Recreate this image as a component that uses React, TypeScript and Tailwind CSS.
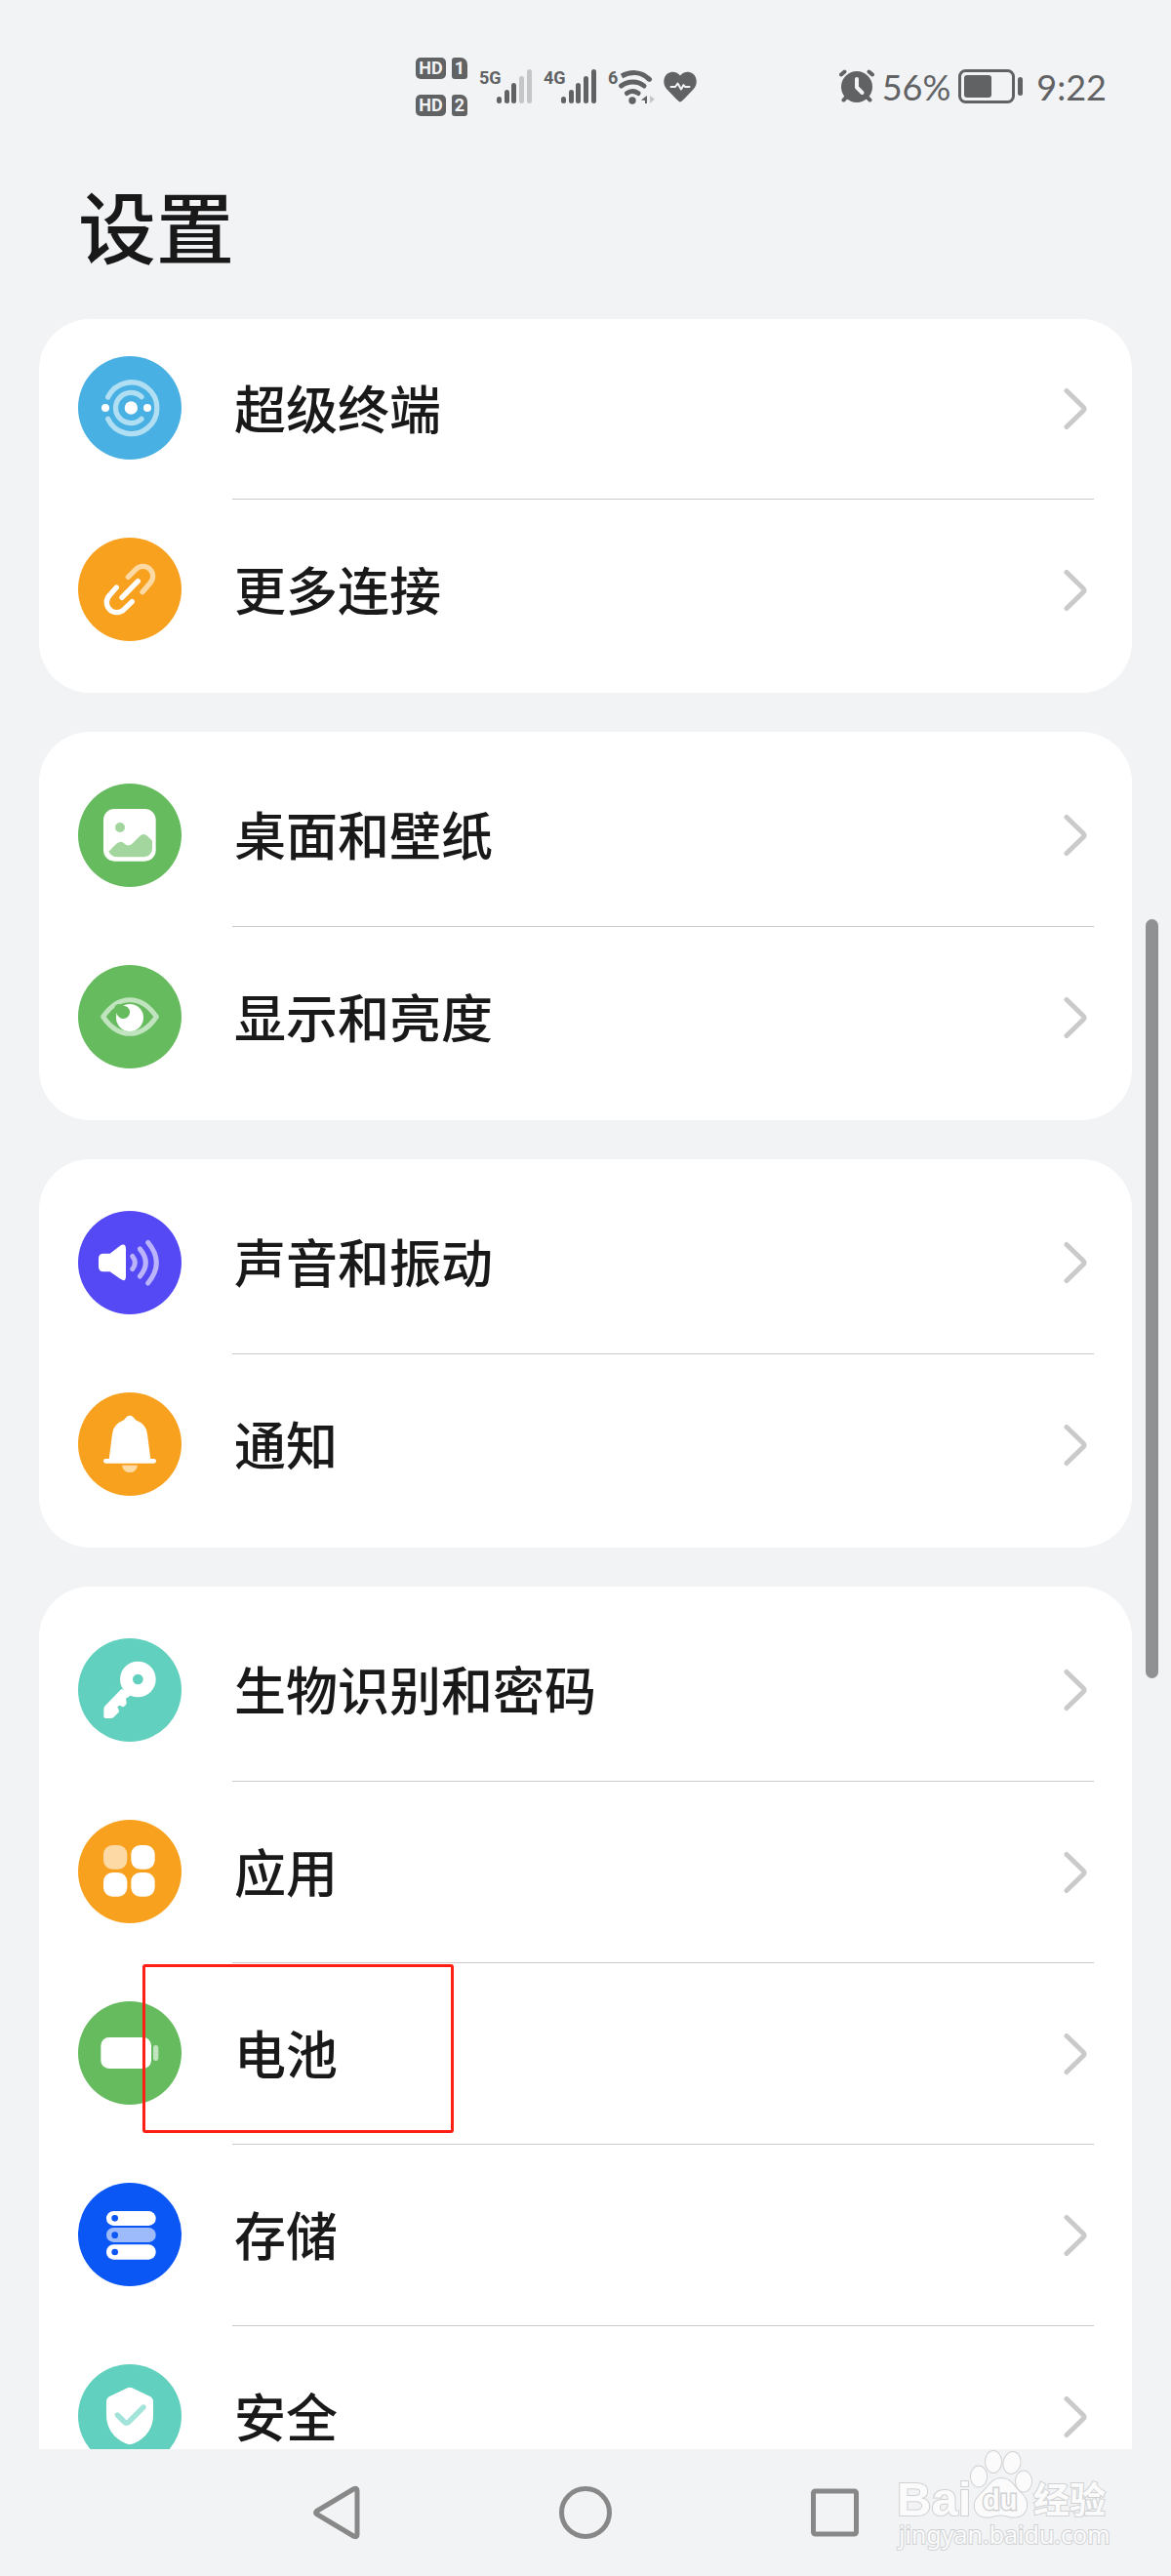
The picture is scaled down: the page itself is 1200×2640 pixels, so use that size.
import type { ReactNode } from "react";

type Item = {
  label: string;
  color: string;
  icon: ReactNode;
  marked?: boolean;
};

const stroke = {
  fill: "none",
  strokeLinecap: "round",
  strokeLinejoin: "round",
} as const;

const groups: Item[][] = [
  [
    {
      label: "超级终端",
      color: "bg-[#48b0e2]",
      icon: (
        <>
          <g {...stroke} stroke="#b0dff3" strokeWidth="16">
            <path d="M92 126A79 79 0 1 1 92 193" />
            <path d="M195 125A47 47 0 1 0 195 193" />
          </g>
          <circle cx="163" cy="159" r="20" fill="#fff" />
          <circle cx="84" cy="159" r="12" fill="#fff" />
          <circle cx="213" cy="159" r="12" fill="#fff" />
        </>
      ),
    },
    {
      label: "更多连接",
      color: "bg-[#f8a11f]",
      icon: (
        <g {...stroke} strokeWidth="16">
          <path stroke="#fdd9a3" d="M154 121L178 97A30 30 0 0 1 221 140L198 167" />
          <path stroke="#fff" d="M118 153L97 177A30 30 0 0 0 141 221L166 197" />
          <path stroke="#fff" d="M184 134L135 184" />
        </g>
      ),
    },
  ],
  [
    {
      label: "桌面和壁纸",
      color: "bg-[#65bb5d]",
      icon: (
        <>
          <rect x="78" y="78" width="161" height="161" rx="34" fill="#fff" />
          <g fill="#a3d69e">
            <circle cx="129" cy="135" r="15" />
            <path d="M94 209L116 187Q130 172 143 185Q155 196 168 184L186 165Q200 149 214 162L228 176V200Q226 223 202 226H120Q102 225 94 209Z" />
          </g>
        </>
      ),
    },
    {
      label: "显示和亮度",
      color: "bg-[#65bb5d]",
      icon: (
        <>
          <path
            {...stroke}
            stroke="#c0e4bd"
            strokeWidth="15"
            d="M77 159C100 125 130 107 159 107C188 107 218 125 241 159C218 193 188 211 159 211C130 211 100 193 77 159Z"
          />
          <circle cx="159" cy="162" r="42" fill="#fff" />
          <circle cx="139" cy="145" r="20" fill="#65bb5d" />
          <circle cx="126" cy="134" r="14" fill="#65bb5d" />
        </>
      ),
    },
  ],
  [
    {
      label: "声音和振动",
      color: "bg-[#5549f5]",
      icon: (
        <>
          <path
            fill="#fff"
            d="M78 131H98L128 108Q147 96 147 118V200Q147 222 128 208L98 187H78Q63 187 63 172V146Q63 131 78 131Z"
          />
          <g {...stroke} stroke="#bbb3fb" strokeWidth="15">
            <path d="M167 139Q183 159 167 179" />
            <path d="M190 117Q226 159 190 201" />
            <path d="M215 97Q267 159 215 222" />
          </g>
        </>
      ),
    },
    {
      label: "通知",
      color: "bg-[#f8a11f]",
      icon: (
        <>
          <path
            fill="#fff"
            d="M95 206L105 128Q108 98 141 85Q149 71 159 71Q169 71 177 85Q210 98 213 128L223 206Z"
          />
          <rect x="78" y="204" width="162" height="14" rx="7" fill="#fff" />
          <path fill="#fdd9a3" d="M135 224H183Q179 246 159 246Q139 246 135 224Z" />
        </>
      ),
    },
  ],
  [
    {
      label: "生物识别和密码",
      color: "bg-[#62d0be]",
      icon: (
        <>
          <path
            fill="#fff"
            d="M133 156L83 208Q79 212 79 218V240Q79 246 85 246H100Q106 246 110 242L125 227Q128 222 121 212Q122 206 131 207Q136 212 141 210L148 203Q151 195 147 188Q147 182 152 182L168 172Z"
          />
          <circle cx="184" cy="126" r="55" fill="#fff" />
          <circle cx="184" cy="126" r="16" fill="#62d0be" />
        </>
      ),
    },
    {
      label: "应用",
      color: "bg-[#f8a11f]",
      icon: (
        <g fill="#fff">
          <rect x="78" y="78" width="73" height="74" rx="28" fill="#fdd9a5" />
          <rect x="163" y="78" width="73" height="74" rx="28" />
          <rect x="78" y="162" width="73" height="74" rx="28" />
          <rect x="163" y="162" width="73" height="74" rx="28" />
        </g>
      ),
    },
    {
      label: "电池",
      color: "bg-[#65bb5d]",
      marked: true,
      icon: (
        <>
          <rect x="70" y="111" width="155" height="96" rx="25" fill="#fff" />
          <rect x="231" y="135" width="16" height="48" rx="8" fill="#c0e4bd" />
        </>
      ),
    },
    {
      label: "存储",
      color: "bg-[#0b57f6]",
      icon: (
        <>
          <rect x="87" y="87" width="152" height="45" rx="22" fill="#fff" />
          <rect x="87" y="138" width="152" height="45" rx="22" fill="#9dbbfb" />
          <rect x="87" y="190" width="152" height="46" rx="22" fill="#fff" />
          <g fill="#0b57f6">
            <circle cx="113" cy="109" r="10" />
            <circle cx="113" cy="161" r="10" />
            <circle cx="113" cy="213" r="10" />
          </g>
        </>
      ),
    },
    {
      label: "安全",
      color: "bg-[#62d0be]",
      icon: (
        <>
          <path
            fill="#fff"
            d="M147 75Q159 68 171 75L220 98Q231 103 231 115V155Q231 216 171 244Q159 249 147 244Q87 216 87 155V115Q87 103 98 98Z"
          />
          <path {...stroke} stroke="#a3e4da" strokeWidth="16" d="M121 156L142 177Q149 184 156 177L201 132" />
        </>
      ),
    },
  ],
];

const Signal = ({ label, level }: { label: string; level: number }) => (
  <div className="flex h-[36px] items-start">
    <span className="w-[18px] text-[18px] leading-[18px] font-bold">{label}</span>
    <svg width="36" height="36" viewBox="0 0 36 36" fill="#616264" aria-hidden="true">
      {[28, 21, 14, 7, 0].map((top, i) => (
        <rect
          key={top}
          x={[0, 8, 15, 23, 31][i]}
          y={top}
          width="5"
          height={35 - top}
          rx="2.5"
          fill={i < level ? "#616264" : "#c5c6c8"}
        />
      ))}
    </svg>
  </div>
);

const Sim = ({ n }: { n: number }) => (
  <div className="flex items-center gap-1.5 text-[#f1f3f5]">
    <span className="flex h-[22px] w-[31px] items-center justify-center rounded-[5px] bg-[#616264] text-[18px] leading-none font-bold">
      HD
    </span>
    <span className="flex h-[22px] w-[16px] items-center justify-center rounded-[3px] rounded-tr-[7px] bg-[#616264] text-[18px] leading-none font-bold">
      {n}
    </span>
  </div>
);

const StatusBar = () => (
  <div className="flex items-center pt-[59px] pr-[66px] pl-[426px] font-['Roboto',sans-serif] text-[#616264]">
    <div className="flex flex-col gap-4">
      <Sim n={1} />
      <Sim n={2} />
    </div>
    <div className="ml-3 flex items-center gap-3">
      <Signal label="5G" level={3} />
      <Signal label="4G" level={5} />
    </div>
    <div className="ml-3 flex h-[36px] items-start">
      <span className="w-[9px] text-[18px] leading-[18px] font-bold">6</span>
      <svg width="40" height="37" viewBox="0 0 40 37" aria-hidden="true">
        <g fill="none" stroke="#616264" strokeWidth="5" strokeLinecap="round">
          <path d="M5 7C14 2 25 2 33 10" strokeLinecap="butt" />
          <path d="M33 10L33.5 10.3" />
          <path d="M4.500 17C11 11.500 22 11.500 28 17" />
          <path d="M10.500 24.500Q16 20.500 22 24.500" />
        </g>
        <circle cx="16" cy="32" r="3.700" fill="#616264" />
        <path d="M25 31.500L31 27V35H29V32Z" fill="#616264" />
        <path d="M34 27L39 30.500L34 35Z" fill="#c5c6c8" />
      </svg>
    </div>
    <svg className="ml-2" width="34" height="32" viewBox="0 0 34 32" aria-hidden="true">
      <path
        fill="#616264"
        d="M17 31.500Q15.500 31 13 28.500L3 18C-1 13 -.5 6 4 2.500C8.500 -.5 14 .5 17 4.500C20 .5 25.500 -.5 30 2.500C34.500 6 35 13 31 18L21 28.500Q18.500 31 17 31.500Z"
      />
      <path
        d="M7.500 16H12L14.500 12.500L18 18.500L20.500 14L22 16H26.500"
        {...stroke}
        stroke="#f1f3f5"
        strokeWidth="2"
      />
    </svg>
    <div className="ml-auto flex items-center">
      <svg width="36" height="36" viewBox="0 0 36 36" aria-hidden="true">
        <circle cx="18" cy="18" r="16" fill="#616264" />
        <g {...stroke} stroke="#616264" strokeWidth="4">
          <path d="M2 5.500L5.500 2.500M34 5.500L30.500 2.500M7 29L4.500 31.500M29 29L31.500 31.500" />
        </g>
        <path {...stroke} stroke="#f1f3f5" strokeWidth="4" d="M18 10V18.500L23.500 24" />
      </svg>
      <span className="ml-2 font-['Lato',sans-serif] text-[36px] leading-[44px]">56%</span>
      <svg className="ml-2" width="66" height="36" viewBox="0 0 66 36" aria-hidden="true">
        <rect x="1.500" y="1.500" width="55" height="32" rx="6" fill="none" stroke="#616264" strokeWidth="3" />
        <rect x="6" y="6" width="28" height="23" rx="3" fill="#616264" />
        <rect x="61" y="8" width="5" height="19" rx="2.500" fill="#616264" />
      </svg>
      <span className="ml-3.5 font-['Lato',sans-serif] text-[36px] leading-[44px]">9:22</span>
    </div>
  </div>
);

const Chevron = () => (
  <svg className="mr-[7px] shrink-0" width="24" height="44" viewBox="0 0 24 44" aria-hidden="true">
    <path {...stroke} stroke="#cacaca" strokeWidth="5" d="M3 3.500L20 20Q22 22 20 24L3 40.500" />
  </svg>
);

const Row = ({ item, first, clipped }: { item: Item; first: boolean; clipped: boolean }) => (
  <li className="relative">
    <a href="#" className="flex pl-10">
      <span className={clipped ? "pt-[38px] pb-10" : "py-10"}>
        <span className={`block size-[106px] rounded-full ${item.color}`}>
          <svg viewBox="0 0 318 318" aria-hidden="true">
            {item.icon}
          </svg>
        </span>
      </span>
      <span
        className={`mr-[39px] ml-[52px] flex flex-1 items-center justify-between pl-0.5 ${
          first ? "" : "border-t border-[#cacaca]"
        }`}
      >
        <span className="pb-1 text-[53px] leading-[72px] font-medium">{item.label}</span>
        <Chevron />
      </span>
    </a>
    {item.marked && (
      <div className="pointer-events-none absolute top-[2px] left-[106px] h-[173px] w-[319px] rounded-[3px] border-[3px] border-[#ff1f14]" />
    )}
  </li>
);

const Watermark = () => (
  <svg
    className="pointer-events-none absolute right-[62px] bottom-[24px]"
    width="220"
    height="106"
    viewBox="0 0 220 106"
    fill="#fbfbfb"
    stroke="#d0d1d3"
    strokeWidth="2"
    aria-hidden="true"
  >
    <g style={{ paintOrder: "stroke" }}>
      <text x="1" y="68" fontFamily="Liberation Sans, sans-serif" fontSize="49" fontWeight="700">
        Bai
      </text>
      <ellipse cx="85" cy="28" rx="8" ry="10.500" />
      <ellipse cx="100" cy="13" rx="8" ry="11" />
      <ellipse cx="119" cy="14" rx="8.500" ry="11" transform="rotate(12 119 14)" />
      <ellipse cx="131" cy="33" rx="8" ry="10.500" />
      <path d="M108 30C118 30 121 38 127 44C132 48 135 53 134 60C132 68 125 71 116 69C110 67 105 67 99 69C90 71 82 68 81 60C80 52 85 48 90 43C96 37 99 30 108 30Z" />
      <text x="89" y="62" fontFamily="Liberation Sans, sans-serif" fontSize="29" fontWeight="700" strokeWidth="3">
        du
      </text>
      <text x="141" y="66" fontFamily="Noto Sans CJK SC, sans-serif" fontSize="37" fontWeight="700">
        经验
      </text>
      <text x="3" y="97" fontFamily="Noto Sans, sans-serif" fontSize="25">
        jingyan.baidu.com
      </text>
    </g>
  </svg>
);

const NavBar = () => (
  <nav className="grid h-[130px] shrink-0 grid-cols-3 place-items-center px-[18%]">
    <button type="button" aria-label="返回">
      <svg width="56" height="56" viewBox="0 0 56 56">
        <path {...stroke} stroke="#888" strokeWidth="5" d="M8.500 26.500Q6.500 28 8.500 29.500L47 52.500Q50 53.500 50 50.500V5.500Q50 2.500 47 3.500Z" />
      </svg>
    </button>
    <button type="button" aria-label="主屏幕">
      <svg width="56" height="56" viewBox="0 0 56 56">
        <circle {...stroke} cx="28" cy="28" r="24.500" stroke="#888" strokeWidth="5" />
      </svg>
    </button>
    <button type="button" aria-label="最近任务">
      <svg width="56" height="56" viewBox="0 0 56 56">
        <rect {...stroke} x="5.500" y="6" width="44" height="44" rx="2" stroke="#888" strokeWidth="5" />
      </svg>
    </button>
  </nav>
);

export default function App() {
  return (
    <div className="relative flex h-screen flex-col overflow-hidden bg-[#f1f3f5] font-['Noto_Sans_CJK_SC',sans-serif] text-[#191919]">
      <header className="shrink-0">
        <StatusBar />
        <h1 className="px-20 pt-[60px] pb-12 text-[80px] leading-[100px] font-medium">设置</h1>
      </header>

      <main className="relative min-h-0 flex-1">
        <div className="flex h-full flex-col gap-10 overflow-y-auto px-10 [scrollbar-width:none]">
          {groups.map((items, g) => (
            <ul
              key={items[0].label}
              className={`shrink-0 rounded-[52px] bg-white pb-[13px] ${g === 0 ? "" : "pt-[13px]"}`}
            >
              {items.map((item, i) => (
                <Row key={item.label} item={item} first={i === 0} clipped={g === 0 && i === 0} />
              ))}
            </ul>
          ))}
        </div>
        {/* scroll thumb */}
        <div className="absolute top-[615px] right-[13px] h-[778px] w-[13px] rounded-full bg-[#8f9193]" />
      </main>

      <NavBar />
      <Watermark />
    </div>
  );
}
